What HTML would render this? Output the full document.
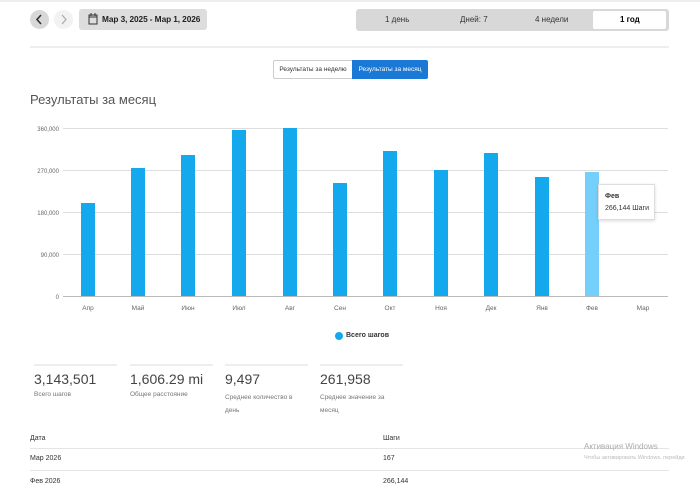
<!DOCTYPE html>
<html><head><meta charset="utf-8"><style>
body{margin:0;width:700px;height:490px;background:#fff;font-family:"Liberation Sans",sans-serif;position:relative;overflow:hidden;color:#333}
.a{position:absolute}
.t{font-size:8px;color:#333}
</style></head><body>
<div class="a" style="left:0;top:0;width:700px;height:2px;background:#eee"></div>
<div class="a" style="left:30px;top:10px;width:19px;height:19px;border-radius:50%;background:#d8d8d8"></div>
<svg class="a" style="left:30px;top:10px" width="19" height="19"><path d="M11 5L7 9.5L11 14" stroke="#333" stroke-width="1.6" fill="none"/></svg>
<div class="a" style="left:54px;top:10px;width:19px;height:19px;border-radius:50%;background:#f2f2f2"></div>
<svg class="a" style="left:54px;top:10px" width="19" height="19"><path d="M8 5L12 9.5L8 14" stroke="#aaa" stroke-width="1.2" fill="none"/></svg>
<div class="a" style="left:79px;top:9px;width:128px;height:21px;background:#ddd;border-radius:3px"></div>
<svg class="a" style="left:88px;top:13px" width="10" height="12"><rect x="1" y="2" width="8" height="9" fill="none" stroke="#333"/><path d="M1 4h8M3 0v3M7 0v3" stroke="#333"/></svg>
<div class="a" style="left:102px;top:14px;font-size:8.3px;font-weight:bold;color:#222;letter-spacing:-0.1px">Мар 3, 2025 - Мар 1, 2026</div>
<div class="a" style="left:356px;top:9px;width:313px;height:22px;background:#d8d8d8;border-radius:3px"></div>
<div class="a" style="left:593px;top:11px;width:73px;height:18px;background:#fff;border-radius:2px"></div>
<div class="a t" style="left:385px;top:15px">1 день</div>
<div class="a t" style="left:460px;top:15px">Дней: 7</div>
<div class="a t" style="left:535px;top:15px">4 недели</div>
<div class="a t" style="left:620px;top:15px;font-weight:bold;color:#000">1 год</div>
<div class="a" style="left:30px;top:46px;width:639px;height:2px;background:#eee"></div>
<div class="a" style="left:273px;top:60px;width:79px;height:19px;border:1px solid #ccc;border-right:none;box-sizing:border-box;font-size:6.5px;line-height:17px;text-align:center;border-radius:2px 0 0 2px">Результаты за неделю</div>
<div class="a" style="left:352px;top:60px;width:76px;height:19px;background:#1a78d6;color:#fff;font-size:6.5px;line-height:19px;text-align:center;border-radius:0 2px 2px 0">Результаты за месяц</div>
<div class="a" style="left:30px;top:92px;font-size:13px;color:#555">Результаты за месяц</div>
<svg class="a" style="left:0;top:118px" width="700" height="200">
<g stroke="#ddd" stroke-width="1"><path d="M63 10.5H668M63 52.5H668M63 94.5H668M63 136.5H668"/><path d="M63 178.5H668" stroke="#bbb"/></g>
<g font-size="6" fill="#666" text-anchor="end" font-family="Liberation Sans"><text x="59" y="13">360,000</text><text x="59" y="55">270,000</text><text x="59" y="97">180,000</text><text x="59" y="139">90,000</text><text x="59" y="181">0</text></g>
<g fill="#14a9ec">
<rect x="81" y="85" width="14" height="93"/><rect x="131" y="50" width="14" height="128"/><rect x="181" y="37" width="14" height="141"/><rect x="232" y="12" width="14" height="166"/><rect x="283" y="10" width="14" height="168"/><rect x="333" y="65" width="14" height="113"/><rect x="383" y="33" width="14" height="145"/><rect x="434" y="52" width="14" height="126"/><rect x="484" y="35" width="14" height="143"/><rect x="535" y="59" width="14" height="119"/></g>
<rect x="585" y="54" width="14" height="124" fill="#74d0fb"/>
<g font-size="6.5" fill="#666" text-anchor="middle" font-family="Liberation Sans"><text x="88" y="192">Апр</text><text x="138" y="192">Май</text><text x="188" y="192">Июн</text><text x="239" y="192">Июл</text><text x="290" y="192">Авг</text><text x="340" y="192">Сен</text><text x="390" y="192">Окт</text><text x="441" y="192">Ноя</text><text x="491" y="192">Дек</text><text x="542" y="192">Янв</text><text x="592" y="192">Фев</text><text x="643" y="192">Мар</text></g>
</svg>
<div class="a" style="left:598px;top:184px;width:55px;height:34px;background:#fff;border:1px solid #ddd;box-shadow:0 1px 3px rgba(0,0,0,.15);font-size:7px">
<div style="position:absolute;left:6px;top:8px;font-weight:bold">Фев</div>
<div style="position:absolute;left:6px;top:20px">266,144 Шаги</div></div>
<div class="a" style="left:335px;top:332px;width:8px;height:8px;border-radius:50%;background:#14a9ec"></div>
<div class="a" style="left:346px;top:332px;font-size:7px;font-weight:bold">Всего шагов</div>
<div class="a" style="left:34px;top:364px;width:83px;height:2px;background:#eee"></div>
<div class="a" style="left:130px;top:364px;width:83px;height:2px;background:#eee"></div>
<div class="a" style="left:225px;top:364px;width:83px;height:2px;background:#eee"></div>
<div class="a" style="left:320px;top:364px;width:83px;height:2px;background:#eee"></div>
<div class="a" style="left:34px;top:371px;font-size:14px;color:#444">3,143,501</div>
<div class="a" style="left:130px;top:371px;font-size:14px;color:#444">1,606.29 mi</div>
<div class="a" style="left:225px;top:371px;font-size:14px;color:#444">9,497</div>
<div class="a" style="left:320px;top:371px;font-size:14px;color:#444">261,958</div>
<div class="a" style="left:34px;top:391px;font-size:6.5px;color:#777">Всего шагов</div>
<div class="a" style="left:130px;top:391px;font-size:6.5px;color:#777">Общее расстояние</div>
<div class="a" style="left:225px;top:391px;font-size:6.5px;color:#777;line-height:13px;width:80px">Среднее количество в день</div>
<div class="a" style="left:320px;top:391px;font-size:6.5px;color:#777;line-height:13px;width:80px">Среднее значение за месяц</div>
<div class="a" style="left:30px;top:435px;font-size:7px">Дата</div>
<div class="a" style="left:383px;top:435px;font-size:7px">Шаги</div>
<div class="a" style="left:30px;top:448px;width:639px;height:1px;background:#e5e5e5"></div>
<div class="a" style="left:30px;top:455px;font-size:7px">Мар 2026</div>
<div class="a" style="left:383px;top:455px;font-size:7px">167</div>
<div class="a" style="left:30px;top:470px;width:639px;height:1px;background:#e5e5e5"></div>
<div class="a" style="left:30px;top:478px;font-size:7px">Фев 2026</div>
<div class="a" style="left:383px;top:478px;font-size:7px">266,144</div>
<div class="a" style="left:584px;top:442px;font-size:8px;color:#aaa">Активация Windows</div>
<div class="a" style="left:584px;top:455px;font-size:5.5px;color:#bbb;white-space:nowrap">Чтобы активировать Windows, перейди</div>
</body></html>
